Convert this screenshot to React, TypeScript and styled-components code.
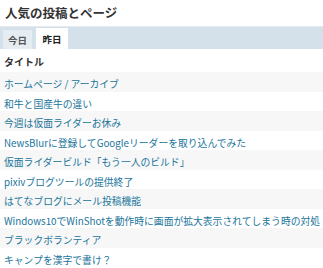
import React from "react";
import styled, { createGlobalStyle } from "styled-components";

const Global = createGlobalStyle`
  html, body { margin: 0; padding: 0; background: #fff; }
  body { font-family: "Noto Sans CJK JP", "Noto Sans", sans-serif; }
`;

const Widget = styled.div`
  width: 323px;
  display: flex;
  flex-direction: column;
`;

const Title = styled.h2`
  margin: 0;
  padding: 0 0 0 5px;
  height: 26px;
  line-height: 26px;
  font-size: 12.5px;
  font-weight: 700;
  color: #333;
`;

const TabBar = styled.div`
  height: 22px;
  background: #d4e1ea;
  border-top: 1px solid #e3ebf1;
  display: flex;
  align-items: flex-end;
  padding-left: 3px;
  gap: 4px;
`;

const Tab = styled.div<{ $active?: boolean }>`
  height: ${(p) => (p.$active ? "21px" : "19px")};
  width: ${(p) => (p.$active ? "32px" : "29px")};
  background: ${(p) => (p.$active ? "#fff" : "#e6edf2")};
  color: ${(p) => (p.$active ? "#222" : "#555")};
  font-size: 9.5px;
  font-weight: 700;
  display: flex;
  align-items: center;
  justify-content: center;
`;

const Table = styled.div`
  display: flex;
  flex-direction: column;
`;

const Header = styled.div`
  height: 23px;
  line-height: 25px;
  padding-left: 4px;
  font-size: 10px;
  font-weight: 700;
  color: #333;
`;

const Row = styled.div<{ $alt: boolean }>`
  height: 19.5px;
  line-height: 19.5px;
  padding-left: 4px;
  background: ${(p) => (p.$alt ? "#f7f7f7" : "#fff")};
  white-space: nowrap;
  overflow: hidden;
`;

const Link = styled.a`
  font-size: 9.8px;
  color: #21759b;
  text-decoration: none;
`;

const posts = [
  "ホームページ / アーカイブ",
  "和牛と国産牛の違い",
  "今週は仮面ライダーお休み",
  "NewsBlurに登録してGoogleリーダーを取り込んでみた",
  "仮面ライダービルド「もう一人のビルド」",
  "pixivブログツールの提供終了",
  "はてなブログにメール投稿機能",
  "Windows10でWinShotを動作時に画面が拡大表示されてしまう時の対処",
  "ブラックボランティア",
  "キャンプを漢字で書け？",
];

export default function App() {
  return (
    <Widget>
      <Global />
      <Title>人気の投稿とページ</Title>
      <TabBar>
        <Tab>今日</Tab>
        <Tab $active>昨日</Tab>
      </TabBar>
      <Table>
        <Header>タイトル</Header>
        {posts.map((p, i) => (
          <Row key={i} $alt={i % 2 === 0}>
            <Link href="#">{p}</Link>
          </Row>
        ))}
      </Table>
    </Widget>
  );
}
